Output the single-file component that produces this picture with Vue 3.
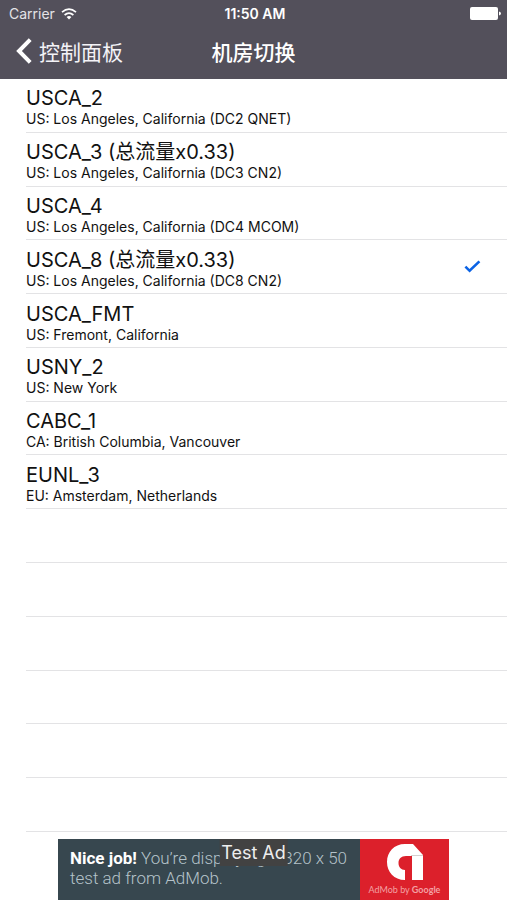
<script setup>
import { ref } from 'vue';

const selected = ref('USCA_8');

const locations = [
  { id: 'USCA_2', name: 'USCA_2', detail: 'US: Los Angeles, California (DC2 QNET)' },
  { id: 'USCA_3', name: 'USCA_3 (总流量x0.33)', detail: 'US: Los Angeles, California (DC3 CN2)' },
  { id: 'USCA_4', name: 'USCA_4', detail: 'US: Los Angeles, California (DC4 MCOM)' },
  { id: 'USCA_8', name: 'USCA_8 (总流量x0.33)', detail: 'US: Los Angeles, California (DC8 CN2)' },
  { id: 'USCA_FMT', name: 'USCA_FMT', detail: 'US: Fremont, California' },
  { id: 'USNY_2', name: 'USNY_2', detail: 'US: New York' },
  { id: 'CABC_1', name: 'CABC_1', detail: 'CA: British Columbia, Vancouver' },
  { id: 'EUNL_3', name: 'EUNL_3', detail: 'EU: Amsterdam, Netherlands' },
];

// empty rows below the list, as a plain table view shows them
const emptyRows = 6;
</script>

<template>
  <div class="screen">
    <header>
      <div class="status">
        <div class="carrier">
          <span>Carrier</span>
          <svg width="16" height="12" viewBox="0 0 16 12" fill="none" stroke="#fff" stroke-width="1.7">
            <path d="M1 4.2Q8-1.8 15 4.2" />
            <path d="M3.6 7Q8 3.2 12.4 7" />
            <path d="M8 11.5L5.6 9Q8 7 10.4 9Z" fill="#fff" stroke="none" />
          </svg>
        </div>
        <span class="time">11:50 AM</span>
        <svg class="battery" width="31" height="13" viewBox="0 0 31 13" fill="#fff">
          <rect x="0" y="0" width="28" height="13" rx="2" />
          <path d="M29 4.5Q31 5 31 6.5T29 8.5Z" />
        </svg>
      </div>
      <nav>
        <button type="button" class="back">
          <svg width="16" height="26" viewBox="0 0 16 26" fill="none" stroke="#fff" stroke-width="4">
            <path d="M14.2 1.6L3 13L14.2 24.4" />
          </svg>
          <span>控制面板</span>
        </button>
        <h1>机房切换</h1>
      </nav>
    </header>

    <main>
      <label v-for="item in locations" :key="item.id" class="row">
        <span class="text">
          <span class="name">{{ item.name }}</span>
          <span class="detail">{{ item.detail }}</span>
        </span>
        <input v-model="selected" type="radio" name="location" :value="item.id" />
        <svg v-if="selected === item.id" width="17" height="13" viewBox="0 0 17 13" fill="none" stroke="#0b63e5" stroke-width="2.6">
          <path d="M1.4 6.6L5.6 10.8L15.4 1.4" />
        </svg>
      </label>
      <div v-for="n in emptyRows" :key="n" class="row"></div>
    </main>

    <footer>
      <a href="#" class="ad">
        <span class="message"><b>Nice job!</b> You’re displaying a 320 x 50 test ad from AdMob.</span>
        <span class="brand">
          <svg width="38" height="38" viewBox="0 0 38 38">
            <path d="M19 1H27L37 12V37H26V13H20C15 13 12.500 16 12.500 20C12.500 24 15 27 19 27V37C8 37 1 29 1 19S8 1 19 1Z" fill="#fff" />
            <path d="M25 12.500H37" stroke="#d5d0d0" stroke-width="1" />
          </svg>
          <span class="by">AdMob by <b>Google</b></span>
        </span>
        <span class="badge">Test Ad</span>
      </a>
    </footer>
  </div>
</template>

<style>
body {
  margin: 0;
  background: #fff;
}
</style>

<style scoped>
.screen {
  display: flex;
  flex-direction: column;
  min-height: 100vh;
  font-family: Inter, 'Noto Sans CJK SC', sans-serif;
  color: #111;
}

header {
  background: #53505b;
  color: #fff;
}

.status {
  display: grid;
  grid-template-columns: 1fr auto 1fr;
  align-items: center;
  height: 27px;
  padding: 0 6px 0 9px;
  font-size: 14px;
}

.carrier {
  display: flex;
  align-items: center;
  gap: 6px;
  color: #e4e3e7;
}

.time {
  font-weight: 600;
}

.battery {
  justify-self: end;
}

nav {
  display: grid;
  grid-template-columns: 1fr auto 1fr;
  align-items: center;
  height: 48px;
  padding: 0 16px 4px;
}

.back {
  display: flex;
  align-items: center;
  gap: 7px;
  padding: 0;
  border: 0;
  background: none;
  color: #f4f3f7;
  font: inherit;
  font-size: 21px;
  cursor: pointer;
}

h1 {
  margin: 0;
  font-size: 21px;
  font-weight: 500;
}

main {
  flex: 1;
  display: grid;
  grid-auto-rows: 1fr;
  padding-left: 26px;
}

.row {
  display: flex;
  align-items: center;
  justify-content: space-between;
  min-height: 48px;
  padding-right: 26px;
  border-bottom: 1px solid #e3e3e5;
}

.text {
  display: flex;
  flex-direction: column;
  padding-top: 4px;
}

.name {
  font-size: 20px;
  line-height: 24px;
}

.detail {
  font-size: 14px;
  line-height: 18px;
}

input {
  appearance: none;
  width: 0;
  height: 0;
  margin: 0 0 0 auto;
}

footer {
  display: flex;
  justify-content: center;
  padding-top: 7px;
}

.ad {
  position: relative;
  display: flex;
  width: 391px;
  max-width: 100%;
  height: 61px;
  background: #37474f;
  color: #b5c3ca;
  font-family: Roboto, sans-serif;
  text-decoration: none;
}

.message {
  flex: 1;
  padding: 9px 0 0 12px;
  font-size: 17px;
  font-weight: 300;
  line-height: 20px;
}

.message b {
  color: #fff;
  font-weight: 700;
}

.brand {
  display: flex;
  flex-direction: column;
  align-items: center;
  width: 89px;
  padding-top: 4px;
  background: #dc202b;
}

.by {
  color: #f3a0a4;
  font-family: Lato, sans-serif;
  font-size: 9px;
  line-height: 18px;
}

.by b {
  font-weight: 700;
}

/* label laid over the banner */
.badge {
  position: absolute;
  top: 0;
  left: 50%;
  transform: translateX(-50%);
  padding: 0 2px;
  background: #424242;
  color: #eee;
  font-family: Inter, sans-serif;
  font-size: 18px;
  line-height: 27px;
  white-space: nowrap;
}
</style>
